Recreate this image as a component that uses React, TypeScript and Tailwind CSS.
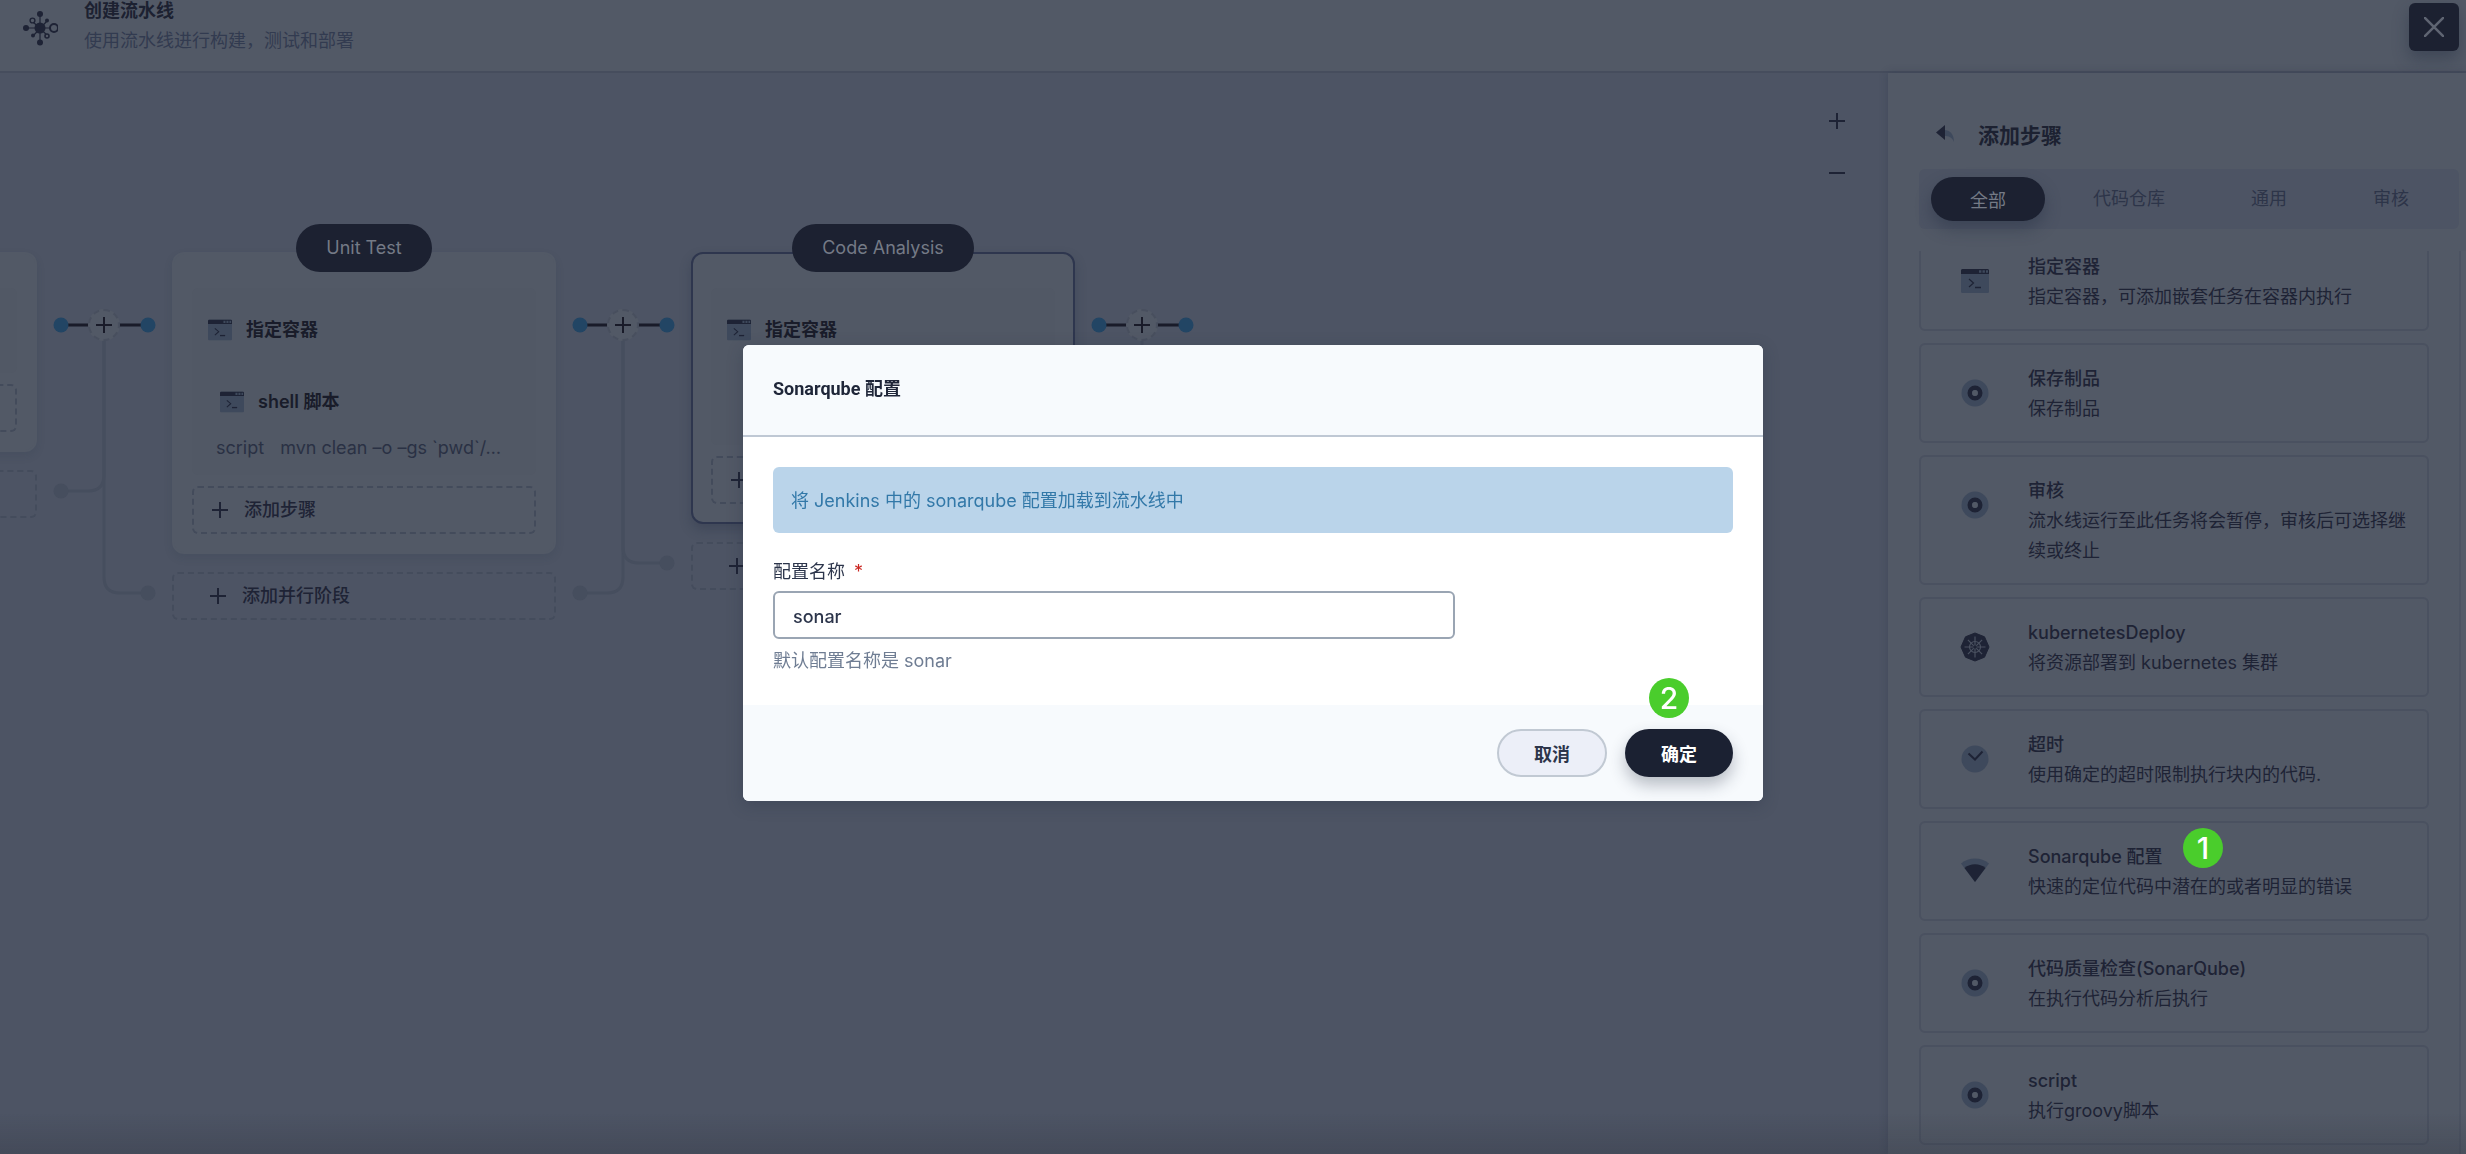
import React, { useState } from 'react';

type IconName = 'terminal' | 'disc' | 'kubernetes' | 'timer' | 'sonar';

const STEPS: { icon: IconName; title: string; desc: string; badge?: string }[] = [
  { icon: 'terminal', title: '指定容器', desc: '指定容器，可添加嵌套任务在容器内执行' },
  { icon: 'disc', title: '保存制品', desc: '保存制品' },
  { icon: 'disc', title: '审核', desc: '流水线运行至此任务将会暂停，审核后可选择继续或终止' },
  { icon: 'kubernetes', title: 'kubernetesDeploy', desc: '将资源部署到 kubernetes 集群' },
  { icon: 'timer', title: '超时', desc: '使用确定的超时限制执行块内的代码.' },
  { icon: 'sonar', title: 'Sonarqube 配置', desc: '快速的定位代码中潜在的或者明显的错误', badge: '1' },
  { icon: 'disc', title: '代码质量检查(SonarQube)', desc: '在执行代码分析后执行' },
  { icon: 'disc', title: 'script', desc: '执行groovy脚本' },
];

const TABS = ['全部', '代码仓库', '通用', '审核'];

function PipelineLogo() {
  return (
    <svg width="36" height="36" viewBox="0 0 36 36" fill="#1e2335" stroke="#1e2335" className="shrink-0">
      <path d="M18 4v28M4 18h28M10 11l16 15M25 11L11 26" strokeWidth="1.2" fill="none" />
      <circle cx="18" cy="18" r="5.5" stroke="none" />
      <circle cx="18" cy="4" r="3" stroke="none" />
      <circle cx="18" cy="32.5" r="3" stroke="none" />
      <circle cx="4" cy="18" r="3" stroke="none" />
      <circle cx="25" cy="10.5" r="2" stroke="none" />
      <circle cx="11" cy="25.5" r="2" stroke="none" />
      <circle cx="32" cy="18" r="4" fill="#525966" strokeWidth="2" />
      <circle cx="10.5" cy="10.5" r="2.4" fill="#525966" strokeWidth="1.4" />
      <circle cx="25" cy="26" r="2" fill="#525966" strokeWidth="1.6" />
    </svg>
  );
}

function TerminalIcon({ size }: { size: number }) {
  return (
    <svg width={size} height={size} viewBox="0 0 28 28" className="shrink-0">
      <rect x="0" y="2" width="28" height="24" rx="1.5" fill="#3e495c" />
      <path d="M1.5 2h25A1.5 1.5 0 0 1 28 3.500V7H0V3.500A1.5 1.5 0 0 1 1.500 2z" fill="#1e2335" />
      <path d="M18 4.500h2.400M21.500 4.500h2.400M25 4.500h2" stroke="#3e495c" strokeWidth="2.400" />
      <path d="M8 12l4.500 4L8 20" stroke="#1e2335" strokeWidth="1.200" fill="none" />
      <path d="M14 20.500h6" stroke="#1e2335" strokeWidth="1.500" />
    </svg>
  );
}

function StepIcon({ name }: { name: IconName }) {
  if (name === 'terminal') return <TerminalIcon size={28} />;
  return (
    <svg width="30" height="30" viewBox="0 0 30 30" className="shrink-0">
      {name === 'disc' && (
        <>
          <circle cx="15" cy="15" r="13.5" fill="#3e495c" />
          <circle cx="15" cy="15" r="5.200" fill="none" stroke="#1e2335" strokeWidth="4.600" />
          <circle cx="15" cy="15" r="2.900" fill="#525966" />
        </>
      )}
      {name === 'timer' && (
        <>
          <circle cx="15" cy="15" r="13.5" fill="#3e495c" />
          <path d="M8.500 9.500l6.500 6 7.500-8" fill="none" stroke="#1e2335" strokeWidth="2" />
        </>
      )}
      {name === 'sonar' && (
        <>
          <path d="M1 7.500a22 22 0 0 1 28 0L15 26z" fill="#3e495c" />
          <path d="M4.500 12a17 17 0 0 1 21 0L15 26z" fill="#1e2335" />
        </>
      )}
      {name === 'kubernetes' && (
        <>
          <path d="M15 1l9.500 3.800L29 15l-4.500 10.200L15 29l-9.500-3.800L1 15 5.500 4.800z" fill="#1e2335" stroke="#1e2335" strokeLinejoin="round" />
          <g stroke="#4a5160" strokeWidth="1.200" fill="none">
            <circle cx="15" cy="15" r="5.500" />
            <path d="M15 4.500v21M4.500 15h21M7.900 7.900l14.200 14.200M22.100 7.900L7.900 22.100" />
          </g>
          <circle cx="15" cy="15" r="1.800" fill="#1e2335" />
        </>
      )}
    </svg>
  );
}

function PlusIcon() {
  return (
    <svg width="16" height="16" viewBox="0 0 16 16" stroke="currentColor" strokeWidth="2" className="shrink-0">
      <path d="M8 0v16M0 8h16" />
    </svg>
  );
}

// Link between two stages. left / right are the heights of the parallel branches.
function Connector({ left, right }: { left?: number; right?: number }) {
  return (
    <div className="relative w-[135px] shrink-0">
      <svg width="135" height="400" className="block" fill="none">
        <g stroke="#464e5e" strokeWidth="3">
          {left && <path d={`M67 88V${left - 16}Q67 ${left} 51 ${left}H24`} />}
          {right && <path d={`M67 88V${right - 16}Q67 ${right} 83 ${right}H111`} />}
        </g>
        {left && <circle cx="24" cy={left} r="7.5" fill="#464e5e" />}
        {right && <circle cx="111" cy={right} r="7.5" fill="#464e5e" />}
        <path d="M24 73h28M82 73h28" stroke="#191b29" strokeWidth="3" />
        <circle cx="24" cy="73" r="7.5" fill="#224564" />
        <circle cx="111" cy="73" r="7.5" fill="#224564" />
      </svg>
      <button
        aria-label="添加阶段"
        className="absolute left-[51px] top-[57px] flex h-8 w-8 items-center justify-center rounded-full border-2 border-dashed border-[#484f5e] bg-[#525966] text-[#191b29]"
      >
        <PlusIcon />
      </button>
    </div>
  );
}

function Stage({ name, active, children }: { name?: string; active?: boolean; children?: React.ReactNode }) {
  return (
    <section className="w-[384px] shrink-0">
      <div
        className={`relative rounded-xl border-2 bg-[#525966] px-[18px] pb-[18px] pt-[34px] ${
          active ? 'border-[#2e364e] shadow-[0_6px_12px_rgba(36,46,66,0.3)]' : 'border-[#525966] shadow-[0_4px_8px_rgba(36,46,66,0.12)]'
        }`}
      >
        {name && (
          <div className="absolute inset-x-0 -top-[30px] flex justify-center">
            <h2 className="h-12 rounded-full bg-[#1c2131] px-[30px] text-lg leading-[48px] text-[#747a86]">{name}</h2>
          </div>
        )}
        {children}
        <button className="mt-[11px] flex h-12 w-full items-center gap-4 rounded-md border-2 border-dashed border-[#434b5b] pl-[18px] font-medium text-[#1e2335]">
          <PlusIcon />
          添加步骤
        </button>
      </div>
      <button className="mt-[18px] flex h-12 w-full items-center gap-4 rounded-md border-2 border-dashed border-[#444c5c] pl-9 font-medium text-[#1e2335]">
        <PlusIcon />
        添加并行阶段
      </button>
    </section>
  );
}

function StepRow({ label }: { label: string }) {
  return (
    <div className="flex items-center gap-3.5 font-semibold leading-[30px] text-[#191c2a]">
      <TerminalIcon size={24} />
      {label}
    </div>
  );
}

function PipelineCanvas() {
  return (
    <main className="relative min-w-0 flex-1 overflow-hidden">
      <div className="-ml-[347px] flex pt-[179px]">
        <Stage>
          <div className="h-[85px] rounded-md bg-[#515865]" />
        </Stage>
        <Connector left={239} right={341} />
        <Stage name="Unit Test">
          <div className="rounded-md bg-[#515865] pb-3 pl-4 pr-6 pt-[27px]">
            <StepRow label="指定容器" />
            <div className="pl-3 pt-[42px]">
              <StepRow label="shell 脚本" />
            </div>
            <p className="mt-4 flex gap-4 pl-2 leading-[30px] text-[#2a3144]">
              <span>script</span>
              <span className="whitespace-nowrap">mvn clean –o –gs `pwd`/…</span>
            </p>
          </div>
        </Stage>
        <Connector left={341} right={311} />
        <Stage name="Code Analysis" active>
          <div className="h-[157px] rounded-md bg-[#515865] pl-4 pt-[27px]">
            <StepRow label="指定容器" />
            <div className="flex pl-4 pt-[50px]">
              <StepIcon name="disc" />
            </div>
          </div>
        </Stage>
        <Connector right={311} />
      </div>
      <div className="absolute right-[43px] top-[40px] flex flex-col gap-9 text-[#1e2335]">
        <button aria-label="放大" className="flex h-4 w-4 items-center">
          <PlusIcon />
        </button>
        <button aria-label="缩小" className="flex h-4 w-4 items-center">
          <span className="h-0.5 w-4 bg-current" />
        </button>
      </div>
    </main>
  );
}

function StepPanel() {
  const [tab, setTab] = useState('全部');

  return (
    <aside className="flex w-[578px] shrink-0 flex-col bg-[#525966] shadow-[0_0_8px_rgba(36,46,66,0.3)]">
      <div className="flex h-24 shrink-0 items-end gap-6 pb-[17px] pl-12">
        <button aria-label="返回" className="flex h-9 items-center">
          <svg width="18" height="18" viewBox="0 0 18 18">
            <path d="M8 5c6 0 10 4 10 12-2-5-5-6-10-6z" fill="#3e495c" />
            <path d="M9 0v15L0 7.500z" fill="#1e2335" />
          </svg>
        </button>
        <h2 className="text-[21px] font-semibold leading-8 text-[#1c2131]">添加步骤</h2>
      </div>
      <div className="ml-[31px] mr-[7px] flex h-[60px] shrink-0 items-center gap-1.5 rounded-md bg-[#4d5464] pl-3">
        {TABS.map((t) => (
          <button
            key={t}
            onClick={() => setTab(t)}
            className={
              t === tab
                ? 'mr-0.5 h-11 rounded-full bg-[#1c2131] px-[39px] pt-1 text-[#747a86] shadow-[0_8px_16px_rgba(36,46,66,0.4)]'
                : 'h-11 px-10 text-[#2d3549]'
            }
          >
            {t}
          </button>
        ))}
      </div>
      <div className="mt-[22px] flex min-h-0 flex-1 overflow-hidden">
        <ul className="-mt-5 ml-[31px] mr-[30px] flex flex-1 flex-col gap-3">
          {STEPS.map((s) => (
            <li key={s.title} className="relative flex shrink-0 gap-[17px] rounded-md border-2 border-[#4a5160] p-[18px] leading-[30px] text-[#1e2335]">
              <div className="flex h-[60px] w-[72px] shrink-0 items-center justify-center">
                <StepIcon name={s.icon} />
              </div>
              <div className="-mb-px pt-px">
                <h3 className="font-medium">{s.title}</h3>
                <p>{s.desc}</p>
              </div>
              {s.badge && <Badge n={s.badge} className="left-[262px] top-[5px]" />}
            </li>
          ))}
        </ul>
        <div className="w-[7px] border-l-2 border-[#4c5362] bg-[#545b68]" />
      </div>
    </aside>
  );
}

function Badge({ n, className }: { n: string; className: string }) {
  return (
    <span className={`absolute flex h-10 w-10 items-center justify-center rounded-full bg-[#4acd2c] text-3xl font-medium text-white ${className}`}>
      {n}
    </span>
  );
}

function SonarDialog() {
  const [name, setName] = useState('sonar');

  return (
    <div className="fixed inset-0 flex items-center justify-center pb-2 pl-10">
      <form
        role="dialog"
        aria-labelledby="dialog-title"
        onSubmit={(e) => e.preventDefault()}
        className="w-full max-w-[1020px] overflow-hidden rounded-md bg-white shadow-[0_4px_16px_rgba(36,46,66,0.3)]"
      >
        <header className="border-b-2 border-[#bfc8d4] bg-[#f7fafd] px-[30px] pb-8 pt-[30px]">
          <h1 id="dialog-title" className="font-['Roboto','Noto_Sans_CJK_SC',sans-serif] font-bold leading-7 text-[#1f2639]">
            Sonarqube 配置
          </h1>
        </header>
        <div className="p-[30px]">
          <div className="rounded-md bg-[#bad4ea] px-[18px] pb-[18px] pt-5 leading-7 text-[#3278a8]">
            将 Jenkins 中的 sonarqube 配置加载到流水线中
          </div>
          <label htmlFor="config-name" className="mt-[25px] block leading-7 text-[#2c354b]">
            配置名称 <span className="ml-1 text-[#ca2621]">*</span>
          </label>
          <input
            id="config-name"
            value={name}
            onChange={(e) => setName(e.target.value)}
            className="mt-[5px] block h-12 w-[682px] max-w-full rounded-md border-2 border-[#9aa5b3] px-[18px] pt-0.5 font-medium text-[#2c354b] outline-none"
          />
          <p className="mt-2 leading-7 text-[#6f7d93]">默认配置名称是 sonar</p>
        </div>
        <footer className="relative flex justify-end gap-[18px] bg-[#f7fafd] px-[30px] py-6">
          <button type="button" className="h-12 rounded-full border-2 border-[#c1c9d3] bg-[#eceff8] px-[35px] pt-1 font-semibold text-[#2c354b]">
            取消
          </button>
          <button type="submit" className="h-12 rounded-full bg-[#1b2132] px-9 pt-1 font-semibold text-white shadow-[0_8px_16px_rgba(36,46,66,0.3)]">
            确定
          </button>
          <Badge n="2" className="-top-[27px] right-[74px]" />
        </footer>
      </form>
    </div>
  );
}

export default function App() {
  return (
    <div className="flex h-screen flex-col overflow-hidden bg-[#4d5464] font-['Inter','Noto_Sans_CJK_SC',sans-serif] text-lg">
      <header className="flex h-[73px] shrink-0 items-start border-b-2 border-[#464d5d] bg-[#525966] pl-[22px] pr-[7px]">
        <div className="flex flex-1 gap-[26px]">
          <div className="pt-2.5">
            <PipelineLogo />
          </div>
          <div className="flex flex-col gap-2 leading-[22px]">
            <h1 className="font-semibold text-[#1c2131]">创建流水线</h1>
            <p className="text-[#323b50]">使用流水线进行构建，测试和部署</p>
          </div>
        </div>
        <button aria-label="关闭" className="mt-[3px] flex h-12 w-[50px] items-center justify-center rounded-md bg-[#1c2131] shadow-[0_8px_16px_rgba(36,46,66,0.4)]">
          <svg width="20" height="20" viewBox="0 0 20 20" stroke="#5f6572" strokeWidth="2.500">
            <path d="M0 0l20 20M20 0L0 20" />
          </svg>
        </button>
      </header>
      <div className="flex min-h-0 flex-1">
        <PipelineCanvas />
        <StepPanel />
      </div>
      <div className="pointer-events-none fixed inset-x-0 bottom-0 h-10 bg-gradient-to-t from-[#2b2f3b]/25 to-transparent" />
      <SonarDialog />
    </div>
  );
}
